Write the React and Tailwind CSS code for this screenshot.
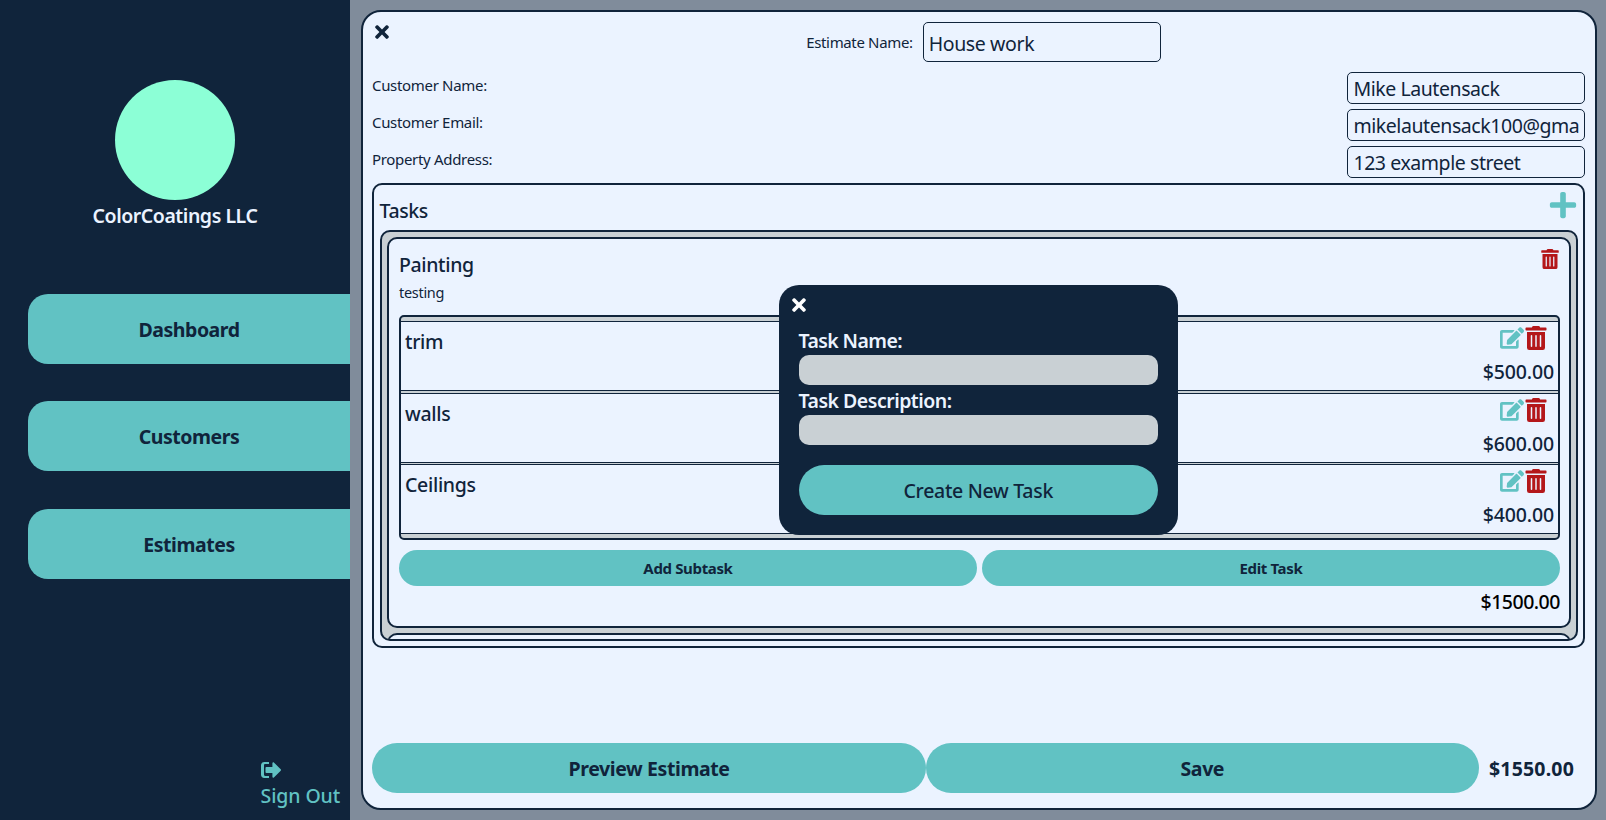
import { FaTimes, FaPlus, FaTrashAlt, FaEdit } from "react-icons/fa";

const subtasks = [
  { name: "trim", price: "$500.00" },
  { name: "walls", price: "$600.00" },
  { name: "Ceilings", price: "$400.00" },
];

function SignOutIcon() {
  return (
    <svg viewBox="0 0 20 16" className="h-4 w-5" fill="currentColor">
      <path d="M8 0v2H4.2C3.5 2 3 2.5 3 3.200v9.600C3 13.500 3.500 14 4.200 14H8v2H3.200C1.400 16 0 14.600 0 12.800V3.200C0 1.400 1.400 0 3.200 0Z" />
      <path d="M5.400 5.100h6V1.200c0-.9.9-1.300 1.500-.7l6.800 6.800c.4.400.4 1 0 1.400l-6.800 6.800c-.6.600-1.500.2-1.500-.7v-3.900h-6c-.6 0-.9-.4-.9-.9V6c0-.5.300-.9.900-.9Z" />
    </svg>
  );
}

function NavButton({ children }) {
  return (
    <button className="ml-7 flex h-[70px] shrink-0 items-center justify-center rounded-l-[20px] bg-[#61c2c3] pt-px text-[19.5px] font-bold tracking-[-0.45px]">
      {children}
    </button>
  );
}

function Sidebar() {
  return (
    <aside className="flex w-[350px] shrink-0 flex-col bg-[#10243b] pt-20">
      <div className="mx-auto size-[120px] rounded-full bg-[#8cffd6]" />
      <h1 className="h-[94px] text-center text-[19.5px] leading-[32px] font-semibold tracking-[-0.45px] text-[#ebf3ff]">
        ColorCoatings LLC
      </h1>
      <nav className="flex flex-col gap-[37.400px]">
        <NavButton>Dashboard</NavButton>
        <NavButton>Customers</NavButton>
        <NavButton>Estimates</NavButton>
      </nav>
      <div className="mt-auto mb-[10px] ml-[260.500px] text-[#61c2c3]">
        <SignOutIcon />
        <p className="mt-1 text-[19.5px] leading-7 font-medium tracking-[-0.1px]">Sign Out</p>
      </div>
    </aside>
  );
}

function Field({ label, value }) {
  return (
    <div className="flex h-8 justify-between">
      <label className="-ml-[0.500px] text-[15px] leading-[27px] tracking-[-0.32px]">{label}</label>
      <div className="w-[238px] overflow-hidden rounded-[5px] border border-[#10243b] pl-[5px] text-[19.5px] leading-[31px] font-normal tracking-[-0.43px] whitespace-nowrap">
        {value}
      </div>
    </div>
  );
}

function Subtask({ name, price }) {
  return (
    <div className="flex h-[70px] shrink-0 justify-between border-y border-[#10243b] bg-[#ebf3ff] px-1">
      <span className="pt-1.5 text-[19.5px] leading-7 font-medium tracking-[-0.3px]">{name}</span>
      <div className="flex flex-col items-end">
        <div className="flex pt-1 pr-1.5 text-2xl">
          <FaEdit className="text-[#61c2c3]" />
          <FaTrashAlt className="text-[#b4171a]" />
        </div>
        <span className="pt-2 text-[19.5px] leading-7 font-medium tracking-[-0.15px]">{price}</span>
      </div>
    </div>
  );
}

function TaskCard() {
  return (
    <section className="flex h-[391px] shrink-0 flex-col rounded-[10px] border-2 border-[#10243b] bg-[#ebf3ff] pr-[9.500px] pl-2.5 pt-2.5">
      <div className="flex h-[66px] justify-between">
        <div>
          <h3 className="pt-0.5 text-[19.5px] leading-7 font-medium tracking-[-0.35px]">Painting</h3>
          <p className="text-[14.500px] leading-[26.500px] font-normal tracking-[-0.3px]">testing</p>
        </div>
        <FaTrashAlt className="text-xl text-[#b4171a]" />
      </div>
      <div className="flex h-[225px] flex-col gap-[1.500px] rounded-[5px] border-2 border-[#10243b] bg-[#c9d0d4] pt-1">
        {subtasks.map((s) => (
          <Subtask key={s.name} {...s} />
        ))}
      </div>
      <div className="mt-2.5 flex h-9 gap-[5px] text-[15px] font-bold tracking-[-0.35px]">
        <button className="flex-1 rounded-full bg-[#61c2c3]">Add Subtask</button>
        <button className="flex-1 rounded-full bg-[#61c2c3]">Edit Task</button>
      </div>
      <p className="pt-0.5 text-right text-[19.5px] leading-7 font-medium tracking-[-0.5px] text-black">$1500.00</p>
    </section>
  );
}

function TaskDialog() {
  return (
    <div className="absolute top-[285px] left-[778.500px] flex h-[250px] w-[399.500px] flex-col rounded-[20px] bg-[#10243b] px-5 text-[19.5px] text-[#ebf3ff]">
      <FaTimes className="mt-2.5 -ml-2.5 text-xl text-white" />
      <label className="mt-[11px] h-[29px] leading-[30px] font-semibold tracking-[-0.6px]">Task Name:</label>
      <div className="h-[30px] rounded-[10px] bg-[#c9d0d4]" />
      <label className="h-[30px] leading-[31px] font-semibold tracking-[-0.5px]">Task Description:</label>
      <div className="h-[30px] rounded-[10px] bg-[#c9d0d4]" />
      <button className="mt-5 h-[50px] rounded-full bg-[#61c2c3] pt-0.5 font-medium tracking-[-0.3px] text-[#10243b]">Create New Task</button>
    </div>
  );
}

export default function App() {
  return (
    <div className="relative flex h-[820px] w-[1606px] overflow-hidden bg-[#808c9b] font-['Noto_Sans','Open_Sans',sans-serif] text-[#10243b]">
      <Sidebar />
      <main className="my-2.5 mr-[9px] ml-[10.600px] flex flex-1 flex-col rounded-[20px] border-2 border-[#10243b] bg-[#ebf3ff] pr-[9.600px] pl-[9.900px] pt-2.5">
        <div className="grid h-10 grid-cols-[1fr_auto_1fr]">
          <FaTimes className="text-xl" />
          <div className="ml-[9px] flex h-10 items-center gap-2.5">
            <label className="text-[15px] tracking-[-0.35px]">Estimate Name:</label>
            <div className="h-10 w-[238px] rounded-[5px] border border-[#10243b] pl-[5px] text-[19.5px] leading-[42px] font-normal tracking-[-0.38px]">
              House work
            </div>
          </div>
        </div>
        <div className="mt-2.5 flex flex-col gap-[5px]">
          <Field label="Customer Name:" value="Mike Lautensack" />
          <Field label="Customer Email:" value="mikelautensack100@gma" />
          <Field label="Property Address:" value="123 example street" />
        </div>
        <section className="mt-[5px] flex h-[465px] flex-col rounded-[10px] border-2 border-[#10243b] pr-[5px] pb-[5px] pl-[5.500px]">
          <div className="flex h-[45px] items-center justify-between">
            <h2 className="-ml-[0.500px] pt-1.5 text-[19.5px] font-medium tracking-[-0.4px]">Tasks</h2>
            <FaPlus className="mb-[5px] text-[30px] text-[#61c2c3]" />
          </div>
          <div className="flex h-[411px] flex-col gap-[5px] overflow-hidden rounded-[10px] border-2 border-[#10243b] bg-[#c9d0d4] p-[5px]">
            <TaskCard />
            <section className="h-20 shrink-0 rounded-[10px] border-2 border-[#10243b] bg-[#ebf3ff]" />
          </div>
        </section>
        <footer className="mt-[95px] flex h-[50px] text-[19.5px] font-bold tracking-[-0.4px]">
          <button className="flex-1 rounded-full bg-[#61c2c3] pt-px">Preview Estimate</button>
          <button className="flex-1 rounded-full bg-[#61c2c3] pt-px">Save</button>
          <span className="w-[106.500px] pl-2.5 leading-[52px] tracking-[0.2px]">$1550.00</span>
        </footer>
      </main>
      <TaskDialog />
    </div>
  );
}
